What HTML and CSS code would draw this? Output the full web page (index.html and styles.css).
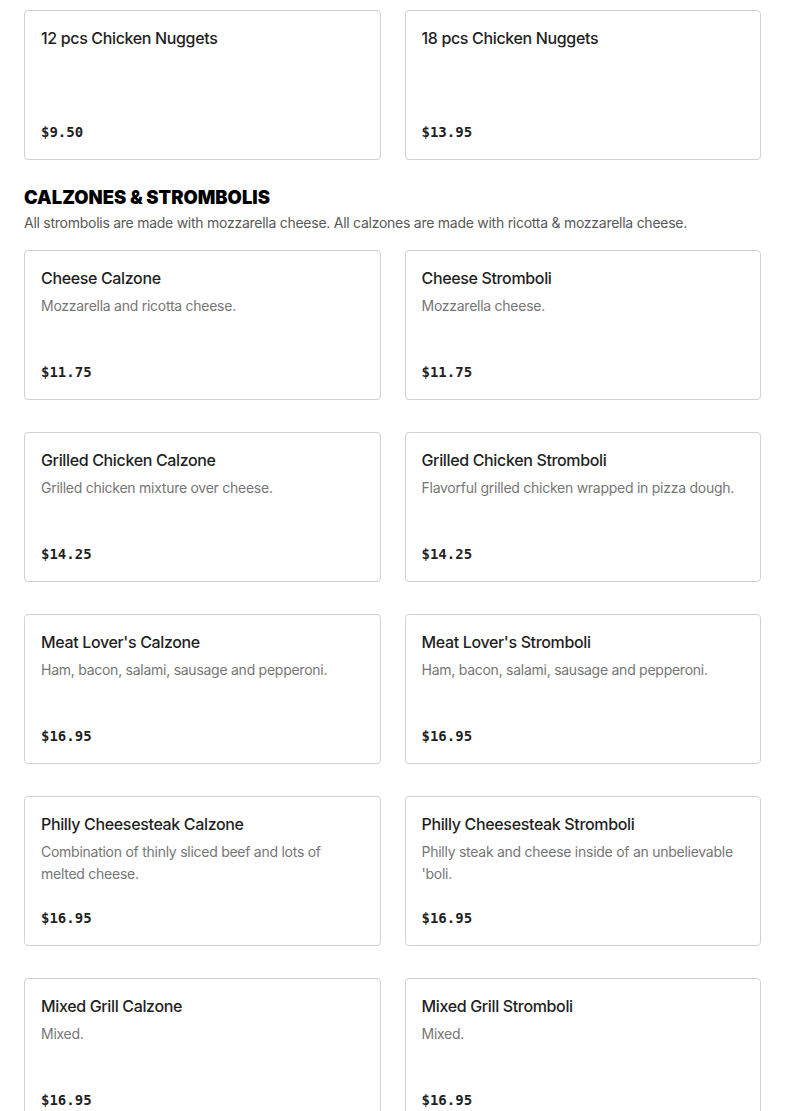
FILE: index.html
```html
<!DOCTYPE html>
<html>
<head>
<meta charset="utf-8">
<link rel="stylesheet" href="styles.css">
</head>
<body>
<div class="page">
  <div class="grid">
    <div class="card"><div class="title">12 pcs Chicken Nuggets</div><div class="price">$9.50</div></div>
    <div class="card"><div class="title">18 pcs Chicken Nuggets</div><div class="price">$13.95</div></div>
  </div>
  <h2 class="section-title">CALZONES &amp; STROMBOLIS</h2>
  <p class="section-desc">All strombolis are made with mozzarella cheese. All calzones are made with ricotta &amp; mozzarella cheese.</p>
  <div class="grid">
    <div class="card"><div class="title">Cheese Calzone</div><div class="desc">Mozzarella and ricotta cheese.</div><div class="price">$11.75</div></div>
    <div class="card"><div class="title">Cheese Stromboli</div><div class="desc">Mozzarella cheese.</div><div class="price">$11.75</div></div>
    <div class="card"><div class="title">Grilled Chicken Calzone</div><div class="desc">Grilled chicken mixture over cheese.</div><div class="price">$14.25</div></div>
    <div class="card"><div class="title">Grilled Chicken Stromboli</div><div class="desc">Flavorful grilled chicken wrapped in pizza dough.</div><div class="price">$14.25</div></div>
    <div class="card"><div class="title">Meat Lover's Calzone</div><div class="desc">Ham, bacon, salami, sausage and pepperoni.</div><div class="price">$16.95</div></div>
    <div class="card"><div class="title">Meat Lover's Stromboli</div><div class="desc">Ham, bacon, salami, sausage and pepperoni.</div><div class="price">$16.95</div></div>
    <div class="card"><div class="title">Philly Cheesesteak Calzone</div><div class="desc">Combination of thinly sliced beef and lots of melted cheese.</div><div class="price">$16.95</div></div>
    <div class="card"><div class="title">Philly Cheesesteak Stromboli</div><div class="desc">Philly steak and cheese inside of an unbelievable 'boli.</div><div class="price">$16.95</div></div>
    <div class="card"><div class="title">Mixed Grill Calzone</div><div class="desc">Mixed.</div><div class="price">$16.95</div></div>
    <div class="card"><div class="title">Mixed Grill Stromboli</div><div class="desc">Mixed.</div><div class="price">$16.95</div></div>
  </div>
</div>
</body>
</html>
```
FILE: styles.css
```css
html, body {
  margin: 0;
  padding: 0;
  background: #fff;
}
body {
  font-family: Inter, "Noto Sans", sans-serif;
  color: #1f1f1f;
}
.page {
  padding: 10px 24px 40px 24px;
}
.grid {
  display: grid;
  grid-template-columns: 1fr 1fr;
  column-gap: 24px;
  row-gap: 32px;
}
.card {
  box-sizing: border-box;
  min-height: 150px;
  border: 1px solid #d2d2d2;
  border-radius: 4px;
  padding: 15px 16px 15px 16px;
  display: flex;
  flex-direction: column;
}
.title {
  font-size: 16px;
  font-weight: 500;
  line-height: 24px;
  letter-spacing: -0.35px;
  color: #1f1f1f;
}
.desc {
  margin-top: 5px;
  font-size: 14px;
  line-height: 22px;
  letter-spacing: -0.26px;
  color: #767676;
}
.price {
  margin-top: auto;
  padding-top: 16px;
  font-family: "DejaVu Sans Mono", "Liberation Mono", monospace;
  font-size: 14px;
  font-weight: bold;
  line-height: 24px;
  color: #1f1f1f;
}
.section-title {
  margin: 25px 0 0 0;
  font-family: Inter, "Liberation Sans", sans-serif;
  font-weight: 900;
  font-size: 18.4px;
  line-height: 24px;
  color: #000;
}
.section-desc {
  margin: 3px 0 16px 0;
  font-size: 14px;
  line-height: 22px;
  letter-spacing: -0.26px;
  color: #595959;
}
```
